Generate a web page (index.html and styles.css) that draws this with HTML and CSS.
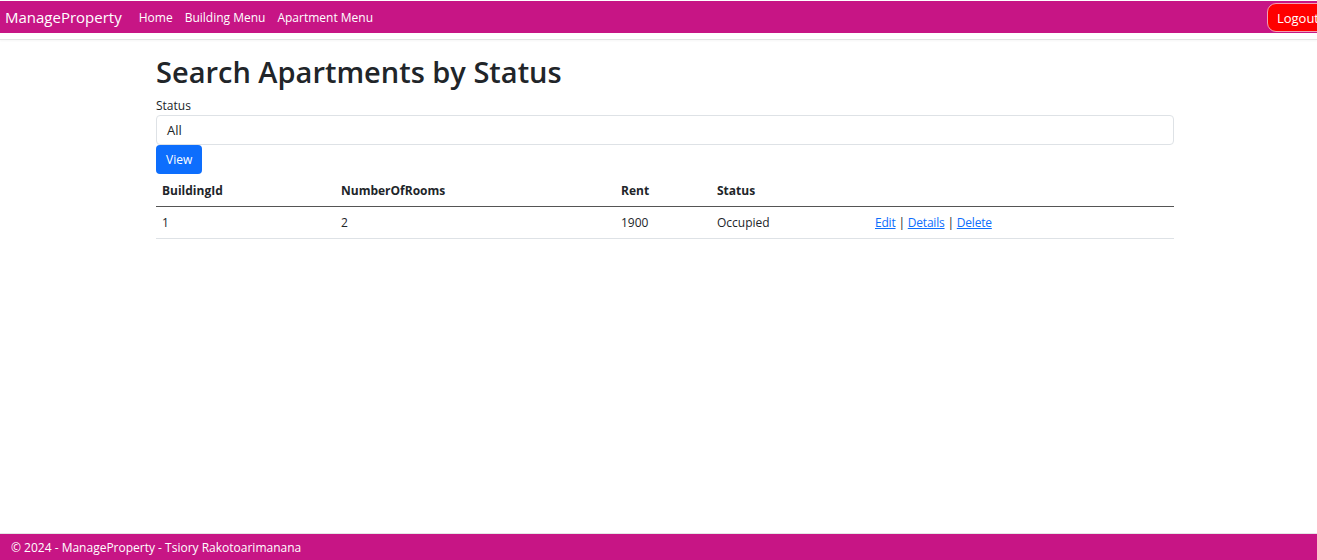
FILE: index.html
```html
<!DOCTYPE html>
<html lang="en">
<head>
<meta charset="utf-8">
<title>Search Apartments by Status - ManageProperty</title>
<link rel="stylesheet" href="styles.css">
</head>
<body>
<header class="site-header">
  <nav class="navbar">
    <a class="brand" href="#">ManageProperty</a>
    <ul class="nav-links">
      <li><a href="#">Home</a></li>
      <li><a href="#">Building Menu</a></li>
      <li><a href="#">Apartment Menu</a></li>
    </ul>
    <button class="logout" type="button">Logout</button>
  </nav>
</header>
<main class="container">
  <h1 class="title">Search Apartments by Status</h1>
  <form class="search-form">
    <label class="label" for="status">Status</label>
    <div class="select" id="status">All</div>
    <button class="btn-view" type="button">View</button>
  </form>
  <table class="table">
    <thead>
      <tr>
        <th class="c1">BuildingId</th>
        <th class="c2">NumberOfRooms</th>
        <th class="c3">Rent</th>
        <th class="c4">Status</th>
        <th class="c5"></th>
      </tr>
    </thead>
    <tbody>
      <tr>
        <td>1</td>
        <td>2</td>
        <td>1900</td>
        <td>Occupied</td>
        <td class="actions"><a href="#">Edit</a> | <a href="#">Details</a> | <a href="#">Delete</a></td>
      </tr>
    </tbody>
  </table>
</main>
<footer class="footer">
  &copy; 2024 - ManageProperty - Tsiory Rakotoarimanana
</footer>
</body>
</html>
```
FILE: styles.css
```css
* { box-sizing: border-box; }
html, body { height: 100%; }
body {
  margin: 0;
  font-family: "Open Sans", "Noto Sans", sans-serif;
  font-size: 13px;
  color: #212529;
  background: #fff;
  display: flex;
  flex-direction: column;
  overflow: hidden;
}
.site-header {
  padding-top: 1px;
  border-bottom: 1px solid #e5e5e5;
  padding-bottom: 6px;
  box-shadow: 0 1px 2px rgba(0,0,0,0.04);
}
.navbar {
  background: #c71585;
  height: 32px;
  display: flex;
  align-items: center;
  padding-left: 5px;
}
.brand {
  color: #fff;
  text-decoration: none;
  font-size: 15px;
  margin-right: 11px;
}
.nav-links {
  list-style: none;
  margin: 0;
  padding: 0;
  display: flex;
  flex: 1;
}
.nav-links a {
  color: #fff;
  text-decoration: none;
  font-size: 12px;
  padding: 0 6px;
  display: block;
}
.logout {
  background: #ff0000;
  color: #fff;
  border: 1px solid #f3a0b0;
  border-radius: 9px;
  font-family: inherit;
  font-size: 13px;
  height: 29px;
  padding: 0 9px;
  margin-right: -12px;
  margin-top: 1px;
}
.container {
  width: 1018px;
  margin-left: 156px;
  flex: 1;
}
.title {
  font-size: 29px;
  font-weight: 600;
  margin: 15px 0 7px;
  line-height: 1.2;
}
.search-form { display: flex; flex-direction: column; align-items: flex-start; }
.label { font-size: 12px; line-height: 18px; }
.select {
  width: 100%;
  height: 30px;
  border: 1px solid #dee2e6;
  border-radius: 4px;
  padding: 0 10px;
  display: flex;
  align-items: center;
  font-size: 13px;
}
.btn-view {
  background: #0d6efd;
  color: #fff;
  border: none;
  border-radius: 4px;
  font-family: inherit;
  font-size: 12px;
  height: 29px;
  padding: 0 10px;
}
.table {
  width: 100%;
  border-collapse: collapse;
  margin-top: 0;
}
.table th {
  text-align: left;
  font-weight: 700;
  font-size: 12px;
  height: 33px;
  padding: 1px 6px 0;
  border-bottom: 1px solid #555;
}
.table td {
  font-size: 12px;
  height: 32px;
  padding: 0 6px;
  border-bottom: 1px solid #dee2e6;
}
.c1 { width: 179px; }
.c2 { width: 280px; }
.c3 { width: 96px; }
.c4 { width: 158px; }
.actions { letter-spacing: -0.2px; }
.table a { color: #0d6efd; }
.footer {
  background: #c71585;
  color: #fff;
  height: 27px;
  display: flex;
  align-items: center;
  padding-left: 11px;
  font-size: 12px;
  border-top: 1px solid #e5e5e5;
}
```
